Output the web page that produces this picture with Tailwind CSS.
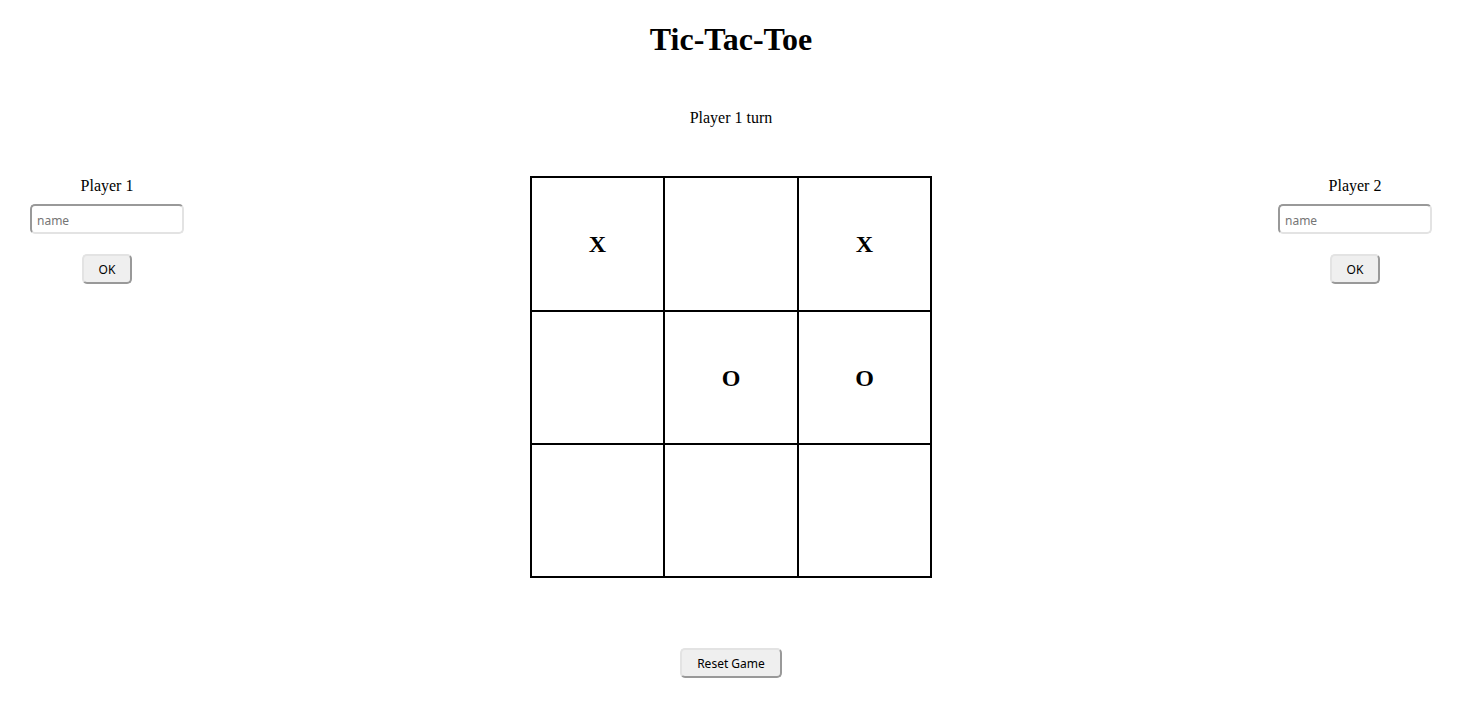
<!DOCTYPE html>
<html lang="en">
<head>
<meta charset="utf-8">
<title>Tic-Tac-Toe</title>
<script src="https://cdn.jsdelivr.net/npm/@tailwindcss/browser@4"></script>
</head>
<body class="bg-white font-['Liberation_Serif',serif] text-base text-black">
<div class="flex flex-col items-center pt-5 pr-[43px] pb-6 pl-[30px]">
  <h1 class="text-[32px] leading-[38px] font-bold">Tic-Tac-Toe</h1>
  <p class="mt-12 leading-6">Player 1 turn</p>
  <main class="mt-[46px] flex w-full items-start justify-between">
    <form class="flex w-[154px] flex-col items-center">
      <label for="player1" class="leading-5">Player 1</label>
      <input id="player1" type="text" placeholder="name" class="mt-2 h-[30px] w-full rounded-[5px] border-2 border-t-[#999] border-r-[#e3e3e3] border-b-[#e3e3e3] border-l-[#999] bg-white px-[5px] pt-0.5 font-['Noto_Sans',sans-serif] text-[12px] placeholder:text-[#757575]">
      <button type="button" class="mt-5 h-[30px] w-[50px] rounded-[5px] border-2 border-t-[#e3e3e3] border-r-[#999] border-b-[#999] border-l-[#e3e3e3] bg-[#efefef] pt-0.5 font-['Noto_Sans',sans-serif] text-[12px]">OK</button>
    </form>
    <div class="grid size-[402px] grid-cols-[131fr_132fr_131fr] grid-rows-[132fr_131fr_131fr] gap-0.5 bg-black p-0.5 text-2xl font-bold">
      <button type="button" class="bg-white">X</button>
      <button type="button" class="bg-white" aria-label="Top middle"></button>
      <button type="button" class="bg-white">X</button>
      <button type="button" class="bg-white" aria-label="Middle left"></button>
      <button type="button" class="bg-white">O</button>
      <button type="button" class="bg-white">O</button>
      <button type="button" class="bg-white" aria-label="Bottom left"></button>
      <button type="button" class="bg-white" aria-label="Bottom middle"></button>
      <button type="button" class="bg-white" aria-label="Bottom right"></button>
    </div>
    <form class="flex w-[154px] flex-col items-center">
      <label for="player2" class="leading-5">Player 2</label>
      <input id="player2" type="text" placeholder="name" class="mt-2 h-[30px] w-full rounded-[5px] border-2 border-t-[#999] border-r-[#e3e3e3] border-b-[#e3e3e3] border-l-[#999] bg-white px-[5px] pt-0.5 font-['Noto_Sans',sans-serif] text-[12px] placeholder:text-[#757575]">
      <button type="button" class="mt-5 h-[30px] w-[50px] rounded-[5px] border-2 border-t-[#e3e3e3] border-r-[#999] border-b-[#999] border-l-[#e3e3e3] bg-[#efefef] pt-0.5 font-['Noto_Sans',sans-serif] text-[12px]">OK</button>
    </form>
  </main>
  <button type="button" class="mt-[70px] h-[30px] w-[102px] rounded-[5px] border-2 border-t-[#e3e3e3] border-r-[#999] border-b-[#999] border-l-[#e3e3e3] bg-[#efefef] pt-0.5 font-['Noto_Sans',sans-serif] text-[12px]">Reset Game</button>
</div>
</body>
</html>
